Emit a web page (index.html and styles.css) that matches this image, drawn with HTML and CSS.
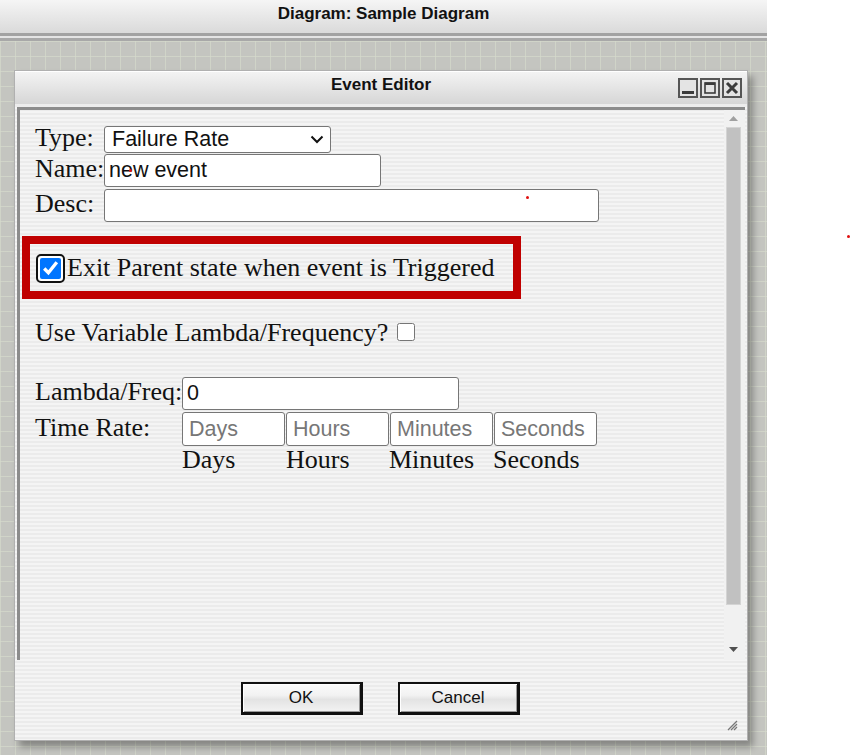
FILE: index.html
```html
<!DOCTYPE html>
<html>
<head>
<meta charset="utf-8">
<title>Event Editor</title>
<link rel="stylesheet" href="styles.css">
</head>
<body>
<div class="app">
  <div class="header">Diagram: Sample Diagram</div>
  <div class="header-sep"></div>
  <div class="workspace">
    <div class="dialog">
      <div class="titlebar">
        <span></span>
        <span class="title">Event Editor</span>
        <div class="winbtns">
          <svg class="wb" viewBox="0 0 20 20" width="20" height="20"><rect x="1" y="1" width="18" height="18" fill="#e4e4e4" stroke="#555" stroke-width="2"/><rect x="4" y="13" width="12" height="3" fill="#3c3c3c"/></svg>
          <svg class="wb" viewBox="0 0 20 20" width="20" height="20"><rect x="1" y="1" width="18" height="18" fill="#e4e4e4" stroke="#555" stroke-width="2"/><rect x="5" y="5" width="10" height="10" fill="none" stroke="#3c3c3c" stroke-width="1.6"/><rect x="5" y="4.5" width="10" height="2.5" fill="#3c3c3c"/></svg>
          <svg class="wb" viewBox="0 0 20 20" width="20" height="20"><rect x="1" y="1" width="18" height="18" fill="#e4e4e4" stroke="#555" stroke-width="2"/><path d="M5 5 L15 15 M15 5 L5 15" stroke="#3c3c3c" stroke-width="3"/></svg>
        </div>
      </div>
      <div class="panel">
        <div class="content">
          <div class="form-top">
            <span class="lbl">Type:</span>
            <div class="select"><span>Failure Rate</span><svg width="14" height="9" viewBox="0 0 14 9"><path d="M1.5 1.5 L7 7 L12.5 1.5" fill="none" stroke="#111" stroke-width="2"/></svg></div>
            <span class="lbl">Name:</span>
            <input class="field name" type="text" value="new event">
            <span class="lbl">Desc:</span>
            <input class="field desc" type="text" value="">
          </div>
          <div class="exit-row">
            <span class="ring"><input type="checkbox" class="cb-big" checked></span><span class="exit-label">Exit Parent state when event is Triggered</span>
          </div>
          <div class="var-row">Use Variable Lambda/Frequency? <input type="checkbox" class="cb-small"></div>
          <div class="form-rate">
            <span class="lbl">Lambda/Freq:</span>
            <input class="field lambda" type="text" value="0">
            <span class="lbl">Time Rate:</span>
            <div class="units">
              <input class="field unit" type="text" placeholder="Days">
              <input class="field unit" type="text" placeholder="Hours">
              <input class="field unit" type="text" placeholder="Minutes">
              <input class="field unit" type="text" placeholder="Seconds">
            </div>
            <span></span>
            <div class="unit-labels">
              <span>Days</span><span>Hours</span><span>Minutes</span><span>Seconds</span>
            </div>
          </div>
        </div>
        <div class="scrollbar">
          <svg class="arrow up" width="9" height="5" viewBox="0 0 9 5"><path d="M0 5 L4.5 0 L9 5 Z" fill="#a0a0a0"/></svg>
          <div class="thumb"></div>
          <div class="spacer"></div>
          <svg class="arrow down" width="9" height="5" viewBox="0 0 9 5"><path d="M0 0 L9 0 L4.5 5 Z" fill="#505050"/></svg>
        </div>
      </div>
      <div class="footer">
        <button class="btn">OK</button>
        <button class="btn">Cancel</button>
      </div>
      <svg class="grip" width="11" height="11" viewBox="0 0 11 11"><path d="M10 1 L1 10 M10 4 L4 10 M10 7 L7 10" stroke="#777" stroke-width="1.3"/></svg>
    </div>
  </div>
</div>
<span class="dot d1"></span>
<span class="dot d2"></span>
<span class="dot d3"></span>
</body>
</html>
```
FILE: styles.css
```css
* { box-sizing: border-box; }
body {
  margin: 0;
  background: #ffffff;
  font-family: "Liberation Serif", "Times New Roman", serif;
  color: #111;
}
.app {
  width: 767px;
  height: 755px;
  display: flex;
  flex-direction: column;
  overflow: hidden;
}
.header {
  height: 36px;
  border-bottom: 3px solid #a2a2a2;
  background: linear-gradient(#f5f5f5, #dadada);
  font: bold 17px "Liberation Sans", Arial, sans-serif;
  text-align: center;
  line-height: 28px;
  color: #111;
}
.header-sep {
  height: 5px;
  background: #e4e4e4;
  border-bottom: 3px solid #a8a8a8;
}
.workspace {
  flex: 1;
  background-color: #c4c5c0;
  background-image:
    linear-gradient(to right, rgba(214,218,204,0.7) 1px, transparent 1px),
    linear-gradient(to bottom, rgba(214,218,204,0.7) 1px, transparent 1px);
  background-size: 15px 15px;
  padding: 29px 0 0 14px;
}
.dialog {
  position: relative;
  width: 734px;
  height: 671px;
  border: 1px solid #b0b0b0;
  background: repeating-linear-gradient(to bottom, #f4f4f4 0 2px, #ebebeb 2px 4px);
  box-shadow: 5px 6px 7px rgba(0,0,0,0.32);
  display: flex;
  flex-direction: column;
}
.titlebar {
  height: 32px;
  flex: none;
  display: grid;
  grid-template-columns: 1fr auto 1fr;
  align-items: center;
  background: linear-gradient(#f3f3f3, #d6d6d6);
  border-top: 1px solid #fff;
  border-bottom: 3px solid #ececec;
  box-sizing: content-box;
}
.title {
  font: bold 17px "Liberation Sans", Arial, sans-serif;
  color: #111;
  padding-bottom: 6px;
}
.winbtns {
  justify-self: end;
  display: flex;
  gap: 2px;
  margin-right: 5px;
}
.wb { display: block; }
.panel {
  flex: none;
  height: 553px;
  margin: 0 2px;
  border-top: 3px solid #8c8c8c;
  border-left: 3px solid #8c8c8c;
  display: flex;
}
.content {
  flex: 1;
  padding: 14px 0 0 15px;
}
.lbl {
  font-size: 26px;
  line-height: 28px;
}
.form-top {
  display: grid;
  grid-template-columns: 69px auto;
  justify-content: start;
  align-items: baseline;
  row-gap: 1px;
}
.select {
  width: 227px;
  height: 27px;
  border: 1px solid #767676;
  border-radius: 3px;
  background: #fff;
  display: flex;
  align-items: center;
  justify-content: space-between;
  padding: 0 6px 0 7px;
  font: 21.5px "Liberation Sans", Arial, sans-serif;
  line-height: 25px;
}
.field {
  height: 33px;
  border: 1px solid #767676;
  border-radius: 3px;
  background: #fff;
  padding: 0 4px;
  font: 21.5px "Liberation Sans", Arial, sans-serif;
  color: #111;
  margin: 0;
}
.field::placeholder { color: #777; }
.name { width: 277px; }
.desc { width: 495px; margin-top: 1px; }
.exit-row {
  margin: 14px 0 0 -13px;
  width: 499px;
  height: 63px;
  border: 8px solid #c00000;
  display: flex;
  align-items: center;
  padding-left: 6px;
  font-size: 26px;
}
.ring {
  display: inline-flex;
  border: 2px solid #111;
  border-radius: 5px;
  padding: 2px;
  background: #fff;
  margin-right: 2px;
  margin-top: 1px;
}
.cb-big {
  width: 21px;
  height: 21px;
  margin: 0;
  display: block;
}
.exit-label { line-height: 30px; }
.var-row {
  margin-top: 19px;
  font-size: 26px;
  line-height: 30px;
}
.cb-small {
  width: 18px;
  height: 18px;
  margin: 0 0 1px 2px;
  vertical-align: baseline;
}
.form-rate {
  margin-top: 29px;
  display: grid;
  grid-template-columns: 147px auto;
  justify-content: start;
  align-items: baseline;
  row-gap: 2px;
}
.lambda { width: 277px; }
.units { display: flex; gap: 1px; }
.unit { width: 103px; height: 34px; padding: 0 6px; }
.unit-labels {
  display: flex;
  font-size: 26px;
  line-height: 28px;
  margin-top: -2px;
}
.unit-labels span { width: 104px; }
.unit-labels span:nth-child(2) { width: 103px; }
.scrollbar {
  width: 21px;
  flex: none;
  background: #f1f1f1;
  display: flex;
  flex-direction: column;
  align-items: center;
  padding: 6px 2px 8px 0;
}
.arrow { display: block; flex: none; }
.thumb {
  margin-top: 6px;
  width: 15px;
  height: 478px;
  background: #c1c1c1;
  border: 1px solid #d4d4d4;
  flex: none;
}
.spacer { flex: 1; }
.footer {
  flex: 1;
  display: flex;
  justify-content: center;
  gap: 35px;
  padding-top: 22px;
  padding-right: 2px;
}
.btn {
  width: 122px;
  height: 33px;
  border: 2px solid #111;
  border-right-width: 3px;
  border-bottom-width: 3px;
  box-shadow: inset 1px 1px 0 #fff, inset -1px -1px 0 #9a9a9a;
  background: linear-gradient(#fbfbfb 0%, #f2f2f2 40%, #e3e3e3 55%, #f3f3f3 100%);
  font: 17px "Liberation Sans", Arial, sans-serif;
  color: #111;
  padding: 0;
}
.grip {
  position: absolute;
  right: 9px;
  bottom: 9px;
}
.dot {
  position: absolute;
  width: 3px;
  height: 3px;
  border-radius: 50%;
  background: #e01010;
}
.d1 { left: 129px; top: 169px; }
.d2 { left: 526px; top: 196px; }
.d3 { left: 847px; top: 235px; }
```
